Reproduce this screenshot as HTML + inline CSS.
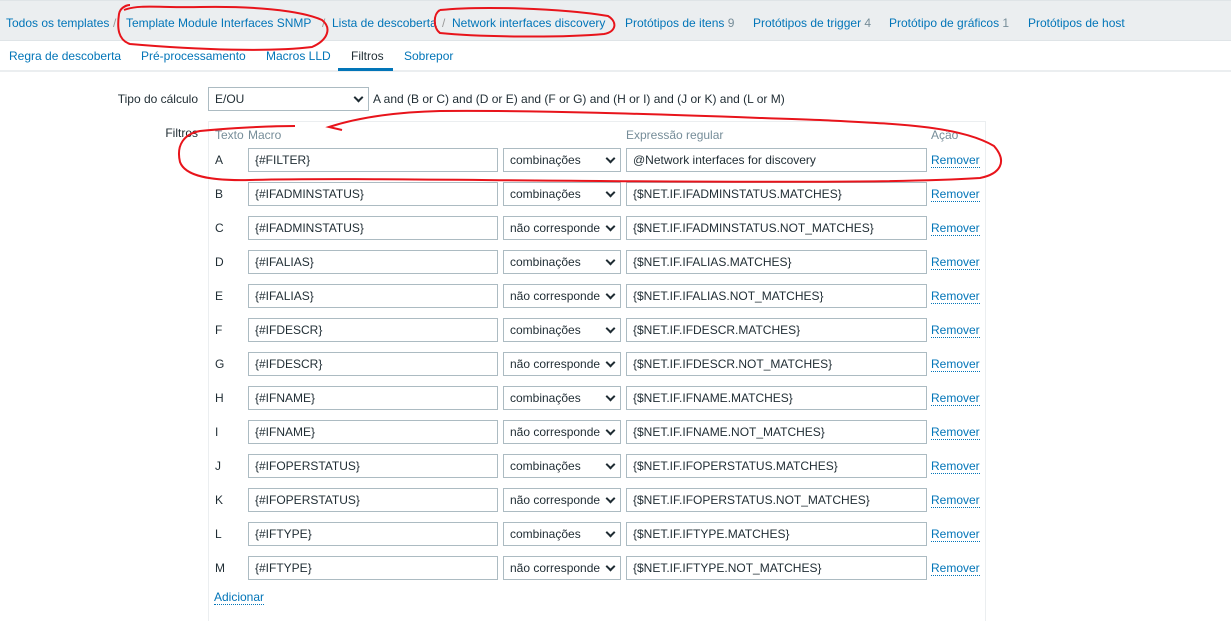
<!DOCTYPE html>
<html><head><meta charset="utf-8"><style>
*{box-sizing:border-box}
body{margin:0;width:1231px;height:616px;overflow:hidden;background:#fff;font-family:"Liberation Sans",Arial,sans-serif;font-size:12px;color:#1f2c33;position:relative}
a{color:#0275b8;text-decoration:none}
.top{position:absolute;left:0;top:0;width:1231px;height:41px;background:#ebeef0;border-top:1px solid #dfe4e7;border-bottom:1px solid #dfe4e7}
.top span{position:absolute;top:15px;white-space:nowrap}
.cnt{color:#768d99}
.tabs{position:absolute;left:0;top:41px;width:1231px;height:31px;border-bottom:2px solid #ebeef0}
.tabs span{position:absolute;top:8px;white-space:nowrap}
.ul{position:absolute;left:339px;top:68px;width:55px;height:3px;background:#0275b8}
.lbl{position:absolute;text-align:right;white-space:nowrap}
.box{position:absolute;left:208px;top:121px;width:778px;height:500px;border:1px solid #ebeef0;border-bottom:none}
.in{position:absolute;height:24px;border:1px solid #acbbc2;background:#fff;padding:4px 6px;white-space:nowrap;overflow:hidden;line-height:14px}
.sel::after{content:"";position:absolute;right:6px;top:6px;width:5px;height:5px;border-right:2px solid #1f2c33;border-bottom:2px solid #1f2c33;transform:rotate(45deg)}
.hd{position:absolute;top:128px;color:#768d99}
.rm{position:absolute;border-bottom:1px dotted #0275b8;line-height:13px}
.rl{position:absolute;left:215px}
</style></head><body>
<div class="top">
<span style="left:6px"><a>Todos os templates</a></span>
<span style="left:113px;color:#999">/</span>
<span style="left:126px"><a>Template Module Interfaces SNMP</a></span>
<span style="left:322px;color:#999">/</span>
<span style="left:332px"><a>Lista de descoberta</a></span>
<span style="left:442px;color:#999">/</span>
<span style="left:452px"><a>Network interfaces discovery</a></span>
<span style="left:625px"><a>Protótipos de itens</a> <span class="cnt" style="position:static">9</span></span>
<span style="left:753px"><a>Protótipos de trigger</a> <span class="cnt" style="position:static">4</span></span>
<span style="left:889px"><a>Protótipo de gráficos</a> <span class="cnt" style="position:static">1</span></span>
<span style="left:1028px"><a>Protótipos de host</a></span>
</div>
<div class="tabs">
<span style="left:9px"><a>Regra de descoberta</a></span>
<span style="left:141px"><a>Pré-processamento</a></span>
<span style="left:266px"><a>Macros LLD</a></span>
<span style="left:351px">Filtros</span>
<span style="left:404px"><a>Sobrepor</a></span>
</div>
<div class="ul" style="left:338px;width:55px"></div>
<div class="lbl" style="left:60px;width:138px;top:92px">Tipo do cálculo</div>
<div class="in sel" style="left:208px;top:87px;width:161px">E/OU</div>
<div style="position:absolute;left:373px;top:92px;white-space:nowrap">A and (B or C) and (D or E) and (F or G) and (H or I) and (J or K) and (L or M)</div>
<div class="lbl" style="left:60px;width:138px;top:126px">Filtros</div>
<div class="box"></div>
<div class="hd" style="left:215px">Texto</div>
<div class="hd" style="left:248px">Macro</div>
<div class="hd" style="left:626px">Expressão regular</div>
<div class="hd" style="left:931px">Ação</div>
<div id="rows"></div>
<a class="rm" style="left:214px;top:591px">Adicionar</a>
<script>
var d=[["A","{#FILTER}",0,"@Network interfaces for discovery"],["B","{#IFADMINSTATUS}",0,"{$NET.IF.IFADMINSTATUS.MATCHES}"],["C","{#IFADMINSTATUS}",1,"{$NET.IF.IFADMINSTATUS.NOT_MATCHES}"],["D","{#IFALIAS}",0,"{$NET.IF.IFALIAS.MATCHES}"],["E","{#IFALIAS}",1,"{$NET.IF.IFALIAS.NOT_MATCHES}"],["F","{#IFDESCR}",0,"{$NET.IF.IFDESCR.MATCHES}"],["G","{#IFDESCR}",1,"{$NET.IF.IFDESCR.NOT_MATCHES}"],["H","{#IFNAME}",0,"{$NET.IF.IFNAME.MATCHES}"],["I","{#IFNAME}",1,"{$NET.IF.IFNAME.NOT_MATCHES}"],["J","{#IFOPERSTATUS}",0,"{$NET.IF.IFOPERSTATUS.MATCHES}"],["K","{#IFOPERSTATUS}",1,"{$NET.IF.IFOPERSTATUS.NOT_MATCHES}"],["L","{#IFTYPE}",0,"{$NET.IF.IFTYPE.MATCHES}"],["M","{#IFTYPE}",1,"{$NET.IF.IFTYPE.NOT_MATCHES}"]];
var h="";d.forEach(function(r,i){var y=148+i*34;
h+='<div class="rl" style="top:'+(y+5)+'px">'+r[0]+'</div>'+
'<div class="in" style="left:248px;top:'+y+'px;width:250px">'+r[1]+'</div>'+
'<div class="in sel" style="left:503px;top:'+y+'px;width:118px">'+(r[2]?'não corresponde':'combinações')+'</div>'+
'<div class="in" style="left:626px;top:'+y+'px;width:301px">'+r[3]+'</div>'+
'<a class="rm" style="left:931px;top:'+(y+6)+'px">Remover</a>';});
document.getElementById("rows").innerHTML=h;
</script>
<svg width="1231" height="616" style="position:absolute;left:0;top:0" fill="none" stroke="#e8141b" stroke-width="2">
<path d="M124,10 C140,4 160,8 200,7 C250,6 300,10 322,20 C332,28 328,40 312,47 C270,52 200,50 130,44 C118,40 117,28 119,14 C120,8 126,5 130,5"/>
<path d="M440,10 C480,6 560,8 608,16 C618,22 616,32 604,34 C560,38 480,37 440,33 C433,28 433,14 440,10"/>
<path d="M342,130 L329,127 C360,117 400,112 440,111 C560,110 700,116 820,120 C900,124 960,126 994,146 C1008,162 1000,174 980,178 C900,183 760,182 600,181 C450,180 330,178 250,180 C210,181 185,176 180,162 C176,145 184,134 200,131 C230,128 270,126 295,126"/>
</svg>
</body></html>
